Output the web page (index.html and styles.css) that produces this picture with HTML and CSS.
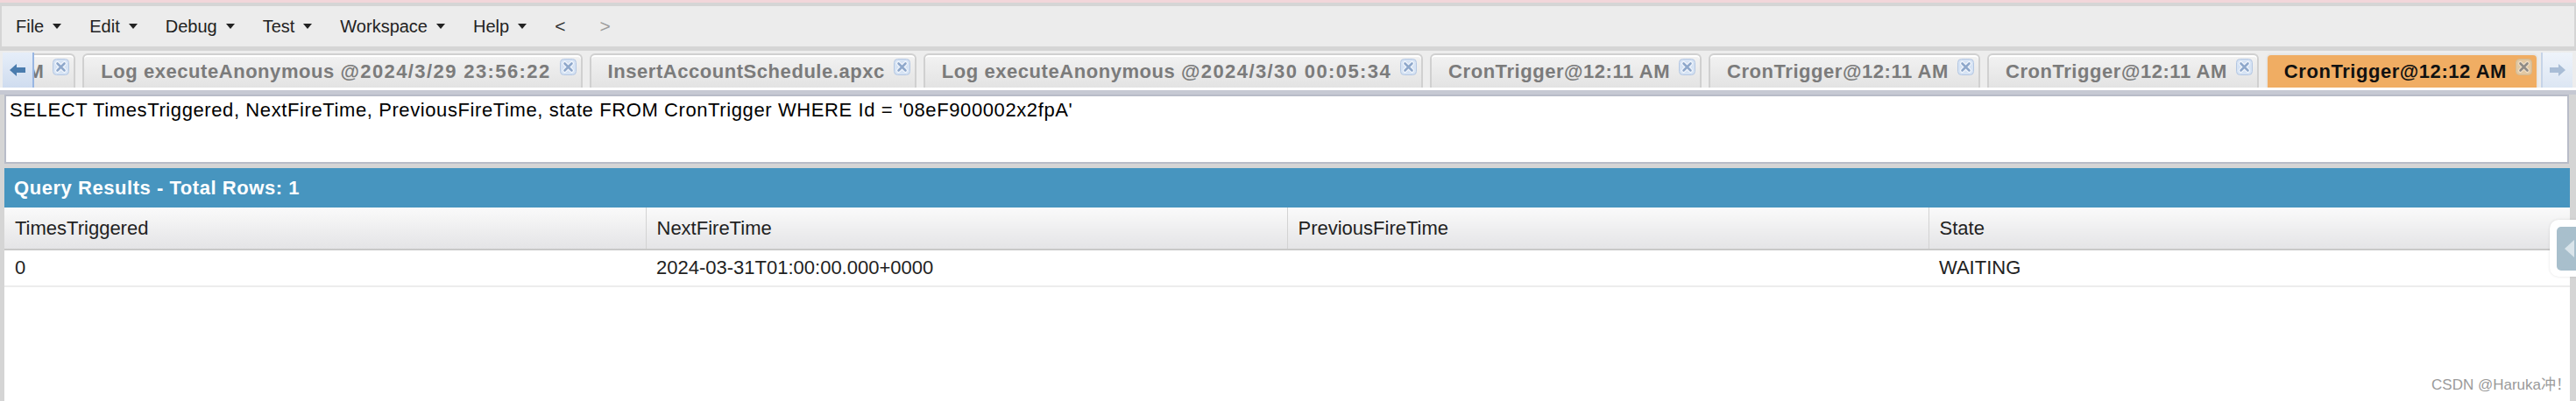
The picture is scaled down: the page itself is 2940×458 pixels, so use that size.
FILE: index.html
```html
<!DOCTYPE html>
<html lang="en">
<head>
<meta charset="utf-8">
<title>Developer Console</title>
<link rel="stylesheet" href="styles.css">
</head>
<body>
<div class="app">
  <nav class="menubar">
    <span class="menu">File<i class="caret"></i></span>
    <span class="menu">Edit<i class="caret"></i></span>
    <span class="menu">Debug<i class="caret"></i></span>
    <span class="menu">Test<i class="caret"></i></span>
    <span class="menu">Workspace<i class="caret"></i></span>
    <span class="menu">Help<i class="caret"></i></span>
    <span class="nav-arrow">&lt;</span>
    <span class="nav-arrow disabled">&gt;</span>
  </nav>

  <div class="tabbar">
    <div class="scroller scroller-left">
      <svg width="20" height="16" viewBox="0 0 20 16"><path d="M1 8 L9 1 L9 5 L19 5 L19 11 L9 11 L9 15 Z" fill="#4a7cae"/></svg>
    </div>
    <div class="tabstrip">
      <div class="tab"><span class="tab-label">CronTrigger@12:10 AM</span><svg class="tab-close" width="19" height="19" viewBox="0 0 19 19"><rect x="0.5" y="0.5" width="18" height="18" rx="4" fill="#d6e3f4" stroke="#b4c7e2"/><path d="M5.5 5.5 L13.5 13.5 M13.5 5.5 L5.5 13.5" stroke="#f4f8fd" stroke-width="5" stroke-linecap="round"/><path d="M5.5 5.5 L13.5 13.5 M13.5 5.5 L5.5 13.5" stroke="#8fa8cb" stroke-width="2.6" stroke-linecap="round"/></svg></div>
      <div class="tab"><span class="tab-label">Log executeAnonymous <span class="stamp">@2024/3/29 23:56:22</span></span><svg class="tab-close" width="19" height="19" viewBox="0 0 19 19"><rect x="0.5" y="0.5" width="18" height="18" rx="4" fill="#d6e3f4" stroke="#b4c7e2"/><path d="M5.5 5.5 L13.5 13.5 M13.5 5.5 L5.5 13.5" stroke="#f4f8fd" stroke-width="5" stroke-linecap="round"/><path d="M5.5 5.5 L13.5 13.5 M13.5 5.5 L5.5 13.5" stroke="#8fa8cb" stroke-width="2.6" stroke-linecap="round"/></svg></div>
      <div class="tab"><span class="tab-label">InsertAccountSchedule.apxc</span><svg class="tab-close" width="19" height="19" viewBox="0 0 19 19"><rect x="0.5" y="0.5" width="18" height="18" rx="4" fill="#d6e3f4" stroke="#b4c7e2"/><path d="M5.5 5.5 L13.5 13.5 M13.5 5.5 L5.5 13.5" stroke="#f4f8fd" stroke-width="5" stroke-linecap="round"/><path d="M5.5 5.5 L13.5 13.5 M13.5 5.5 L5.5 13.5" stroke="#8fa8cb" stroke-width="2.6" stroke-linecap="round"/></svg></div>
      <div class="tab"><span class="tab-label">Log executeAnonymous <span class="stamp">@2024/3/30 00:05:34</span></span><svg class="tab-close" width="19" height="19" viewBox="0 0 19 19"><rect x="0.5" y="0.5" width="18" height="18" rx="4" fill="#d6e3f4" stroke="#b4c7e2"/><path d="M5.5 5.5 L13.5 13.5 M13.5 5.5 L5.5 13.5" stroke="#f4f8fd" stroke-width="5" stroke-linecap="round"/><path d="M5.5 5.5 L13.5 13.5 M13.5 5.5 L5.5 13.5" stroke="#8fa8cb" stroke-width="2.6" stroke-linecap="round"/></svg></div>
      <div class="tab"><span class="tab-label">CronTrigger@12:11 AM</span><svg class="tab-close" width="19" height="19" viewBox="0 0 19 19"><rect x="0.5" y="0.5" width="18" height="18" rx="4" fill="#d6e3f4" stroke="#b4c7e2"/><path d="M5.5 5.5 L13.5 13.5 M13.5 5.5 L5.5 13.5" stroke="#f4f8fd" stroke-width="5" stroke-linecap="round"/><path d="M5.5 5.5 L13.5 13.5 M13.5 5.5 L5.5 13.5" stroke="#8fa8cb" stroke-width="2.6" stroke-linecap="round"/></svg></div>
      <div class="tab"><span class="tab-label">CronTrigger@12:11 AM</span><svg class="tab-close" width="19" height="19" viewBox="0 0 19 19"><rect x="0.5" y="0.5" width="18" height="18" rx="4" fill="#d6e3f4" stroke="#b4c7e2"/><path d="M5.5 5.5 L13.5 13.5 M13.5 5.5 L5.5 13.5" stroke="#f4f8fd" stroke-width="5" stroke-linecap="round"/><path d="M5.5 5.5 L13.5 13.5 M13.5 5.5 L5.5 13.5" stroke="#8fa8cb" stroke-width="2.6" stroke-linecap="round"/></svg></div>
      <div class="tab"><span class="tab-label">CronTrigger@12:11 AM</span><svg class="tab-close" width="19" height="19" viewBox="0 0 19 19"><rect x="0.5" y="0.5" width="18" height="18" rx="4" fill="#d6e3f4" stroke="#b4c7e2"/><path d="M5.5 5.5 L13.5 13.5 M13.5 5.5 L5.5 13.5" stroke="#f4f8fd" stroke-width="5" stroke-linecap="round"/><path d="M5.5 5.5 L13.5 13.5 M13.5 5.5 L5.5 13.5" stroke="#8fa8cb" stroke-width="2.6" stroke-linecap="round"/></svg></div>
      <div class="tab tab-active"><span class="tab-label">CronTrigger@12:12 AM</span><svg class="tab-close" width="19" height="19" viewBox="0 0 19 19"><rect x="0.5" y="0.5" width="18" height="18" rx="4" fill="#e2c8a3" stroke="#d3b992"/><path d="M5.5 5.5 L13.5 13.5 M13.5 5.5 L5.5 13.5" stroke="#f1e0c8" stroke-width="5" stroke-linecap="round"/><path d="M5.5 5.5 L13.5 13.5 M13.5 5.5 L5.5 13.5" stroke="#8f8b87" stroke-width="2.6" stroke-linecap="round"/></svg></div>
    </div>
    <div class="scroller scroller-right">
      <svg width="20" height="16" viewBox="0 0 20 16"><path d="M19 8 L11 1 L11 5 L1 5 L1 11 L11 11 L11 15 Z" fill="#a9bdd6"/></svg>
    </div>
  </div>
  <div class="tab-underline"></div>

  <div class="editor">SELECT TimesTriggered, NextFireTime, PreviousFireTime, state FROM CronTrigger WHERE Id = '08eF900002x2fpA'</div>

  <section class="results">
    <header class="results-title">Query Results - Total Rows: 1</header>
    <table class="grid">
      <thead>
        <tr><th>TimesTriggered</th><th>NextFireTime</th><th>PreviousFireTime</th><th>State</th></tr>
      </thead>
      <tbody>
        <tr><td>0</td><td>2024-03-31T01:00:00.000+0000</td><td></td><td>WAITING</td></tr>
      </tbody>
    </table>
  </section>

  <div class="side-handle"><div class="side-handle-inner"><i class="side-handle-arrow"></i></div></div>
  <div class="watermark">CSDN @Haruka冲！</div>
</div>
</body>
</html>
```

FILE: styles.css
```css
html, body {
  margin: 0;
  padding: 0;
}

body {
  background: #d5d5d5;
  font-family: "Liberation Sans", Arial, "Noto Sans CJK SC", sans-serif;
  overflow: hidden;
}

.app {
  position: relative;
  height: 458px;
  box-sizing: border-box;
  border-top: 3px solid #f2d6da;
  padding-top: 4px;
  display: flex;
  flex-direction: column;
}

/* ---------- menu bar ---------- */
.menubar {
  height: 46px;
  margin: 0 2px;
  padding-left: 16px;
  background: #ececec;
  display: flex;
  align-items: center;
  font-size: 20px;
  color: #222;
  flex: none;
}

.menu {
  display: flex;
  align-items: center;
  margin-right: 32px;
}

.caret {
  width: 0;
  height: 0;
  margin-left: 10px;
  border-left: 5px solid transparent;
  border-right: 5px solid transparent;
  border-top: 6px solid #222;
}

.nav-arrow {
  font-size: 21px;
  color: #333;
  margin-right: 39px;
}

.nav-arrow:first-of-type {
  margin-left: 10px;
}

.nav-arrow.disabled {
  color: #9c9c9c;
}

/* ---------- tab bar ---------- */
.tabbar {
  flex: none;
  margin-top: 5px;
  height: 42px;
  padding: 0 4px 0 3px;
  background: #ededed;
  border-bottom: 3px solid #ffffff;
  display: flex;
  align-items: flex-end;
}

.scroller {
  flex: none;
  width: 36px;
  height: 40px;
  box-sizing: border-box;
  display: flex;
  align-items: center;
  justify-content: center;
  background: linear-gradient(#e6eef9, #cfdcef);
}

.scroller-left {
  border-right: 2px solid #98b6e2;
}

.scroller-right {
  margin-left: 3px;
  border-left: 2px solid #c6d4e8;
  background: linear-gradient(#eef3fa, #dce6f3);
}

.tabstrip {
  flex: 1;
  min-width: 0;
  overflow: hidden;
  display: flex;
  justify-content: flex-end;
  align-items: flex-end;
  gap: 8px;
}

.tab {
  flex: none;
  height: 39px;
  box-sizing: border-box;
  padding: 0 5px 0 19px;
  display: flex;
  align-items: center;
  border: 2px solid #d0d0d0;
  border-bottom: none;
  border-radius: 6px 6px 0 0;
  background: linear-gradient(#f2f2f2, #e3e3e3);
  box-shadow: inset 0 2px 0 #ffffff;
  font-weight: bold;
  font-size: 22px;
  letter-spacing: 0.55px;
  color: #7b7b7b;
  white-space: nowrap;
}

.tab-label {
  line-height: 26px;
}

.stamp {
  letter-spacing: 1.4px;
}

.tab-close {
  flex: none;
  align-self: flex-start;
  margin-top: 4px;
  margin-left: 10px;
}

.tab-active {
  background: #f0ad63;
  border-color: #e6e6e6;
  box-shadow: none;
  color: #111;
}

.tab-underline {
  flex: none;
  height: 5px;
  background: #c6c9d3;
}

/* ---------- editor ---------- */
.editor {
  flex: none;
  height: 79px;
  box-sizing: border-box;
  margin: 0 8px 0 5px;
  padding: 3px 4px;
  border: 2px solid #b8bcc8;
  background: #ffffff;
  font-size: 22px;
  line-height: 26px;
  letter-spacing: 0.6px;
  color: #000;
  white-space: nowrap;
  overflow: hidden;
}

/* ---------- results ---------- */
.results {
  flex: 1;
  margin: 5px 7px 0 5px;
  background: #ffffff;
  display: flex;
  flex-direction: column;
}

.results-title {
  height: 45px;
  box-sizing: border-box;
  padding-left: 11px;
  display: flex;
  align-items: center;
  background: #4795bf;
  color: #ffffff;
  font-weight: bold;
  font-size: 22px;
  letter-spacing: 0.55px;
}

.grid {
  width: 100%;
  table-layout: fixed;
  border-collapse: collapse;
  font-size: 22px;
  color: #222;
}

.grid th {
  height: 48px;
  box-sizing: border-box;
  padding: 0 12px;
  text-align: left;
  font-weight: normal;
  background: linear-gradient(#fafafa, #e4e4e6);
  border-bottom: 2px solid #c8c8c8;
  border-right: 1px solid #d3d3d3;
}

.grid th:last-child {
  border-right: none;
}

.grid td {
  height: 42px;
  box-sizing: border-box;
  padding: 0 12px;
  border-bottom: 2px solid #ededed;
}

/* ---------- floating side handle ---------- */
.side-handle {
  position: absolute;
  left: 2910px;
  top: 248px;
  width: 40px;
  height: 65px;
  box-sizing: border-box;
  padding: 8px 0 7px 8px;
  background: #ffffff;
  border-radius: 10px;
  box-shadow: 0 0 3px rgba(0, 0, 0, 0.12);
}

.side-handle-inner {
  height: 100%;
  background: #a8bfcc;
  border-radius: 5px 0 0 5px;
  display: flex;
  align-items: center;
  padding-left: 9px;
}

.side-handle-arrow {
  width: 0;
  height: 0;
  border-top: 10px solid transparent;
  border-bottom: 10px solid transparent;
  border-right: 11px solid #d9e4ea;
}

/* ---------- watermark ---------- */
.watermark {
  position: absolute;
  right: 6px;
  bottom: 8px;
  font-family: "Liberation Sans", Arial, "Noto Sans CJK SC", sans-serif;
  font-size: 17px;
  color: #9a9a9a;
  text-shadow: 0 0 1px #ffffff;
}
```
